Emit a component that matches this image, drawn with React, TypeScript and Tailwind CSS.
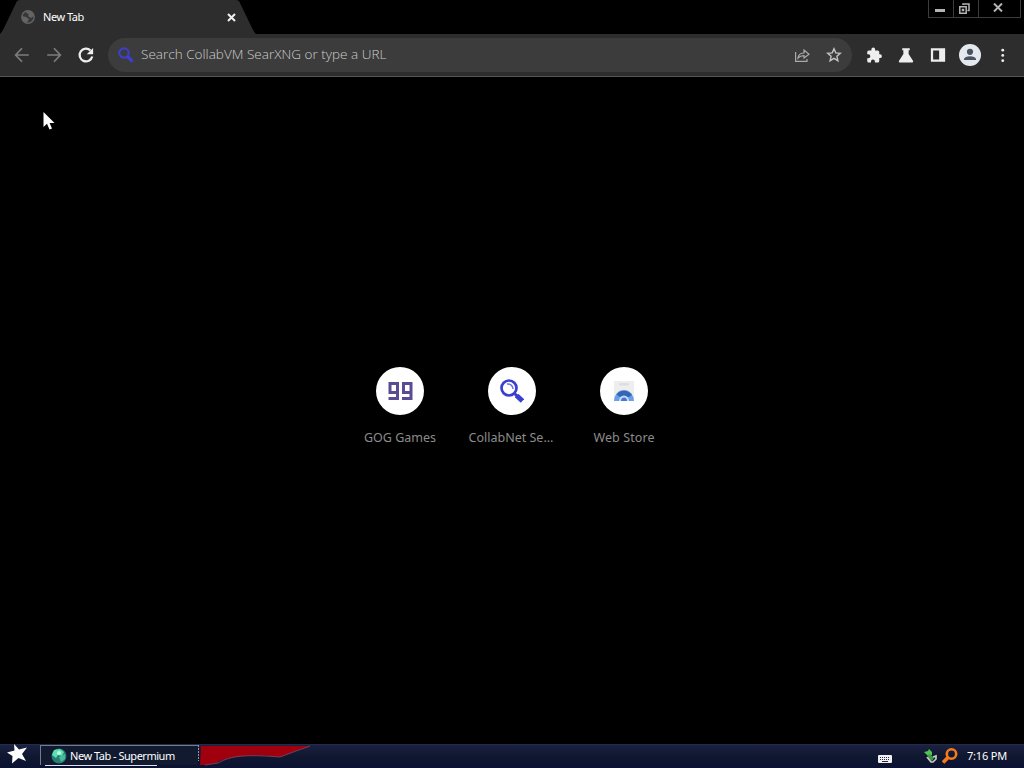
import type { ReactNode } from "react";

const TabStrip = () => {
  return (
    <div className="flex h-[34px] shrink-0 items-start justify-between bg-black">
      <div className="relative flex h-[34px] w-[256px] items-center">
        <svg className="absolute inset-0" width="256" height="34" viewBox="0 0 256 34">
          <path d="M0 34C2 32 3 30 4 28L16 3Q17 0 20 0H236Q239 0 240 3L252 28Q254 32 256 34Z" fill="#2d2d2d" />
        </svg>
        <svg className="relative ml-[21px]" width="14" height="14" viewBox="0 0 14 14">
          <circle cx="7" cy="7" r="6.2" fill="#383838" stroke="#646464" strokeWidth="1.4" />
          <path d="M1 6l4 1 3 2-1 2-2 2-3-2zM6 1l5 1 2 4-3 2-3-2 1-2-3-1z" fill="#646464" />
        </svg>
        <span className="relative ml-2 w-[180px] text-[11px] leading-[14px] tracking-[-0.45px] text-white">New Tab</span>
        <svg className="relative ml-[4px]" width="9" height="9" viewBox="0 0 9 9">
          <path d="M1 1l7 7M8 1L1 8" stroke="#f0f0f0" strokeWidth="2" />
        </svg>
      </div>
      <div className="mr-[3px] flex h-[18px] w-[93px] border-x border-b border-[#3c3c3c]">
        <div className="flex w-[25px] border-r border-[#3c3c3c]">
          <div className="mt-[9px] ml-[6px] h-[3px] w-[10px] bg-[#b4b4b4]" />
        </div>
        <div className="flex w-[25px] border-r border-[#3c3c3c]">
          <svg className="mt-[3px] ml-[5px]" width="11" height="11" viewBox="0 0 11 11" fill="none" stroke="#b4b4b4" strokeWidth="1.5">
            <path d="M4 2V1H10V7.5H8.5M.8 3.8H7.2V10.2H.8ZM3.5 6.5h1v1h-1z" />
          </svg>
        </div>
        <svg className="mt-[3px] ml-[14px]" width="10" height="9" viewBox="0 0 10 9">
          <path d="M1 .5l8 8M9 .5l-8 8" stroke="#b4b4b4" strokeWidth="2" />
        </svg>
      </div>
    </div>
  );
};

const Glyph = ({ children }: { children: ReactNode }) => (
  <svg width="18" height="18" viewBox="0 0 24 24" fill="#eeeeee" className="shrink-0">
    {children}
  </svg>
);

const Toolbar = () => {
  return (
    <div className="flex h-[43px] shrink-0 items-center border-b border-[#565656] bg-[#2d2d2d]">
      <div className="ml-[13px] flex w-[95px] gap-[14px]">
        <Glyph>
          <path d="M21 12H4M12 3L3.5 12L12 21" fill="none" stroke="#7c7c7c" strokeWidth="2.3" />
        </Glyph>
        <Glyph>
          <path d="M3 12H20M12 3L20.500 12L12 21" fill="none" stroke="#7c7c7c" strokeWidth="2.3" />
        </Glyph>
        <Glyph>
          <path d="M18 6a8.5 8.5 0 1 0 2.3 8" fill="none" stroke="#eeeeee" strokeWidth="3" />
          <path d="M21.500 2.500V11H13z" />
        </Glyph>
      </div>
      <div className="flex h-[34px] w-[744px] items-center rounded-full bg-[#3c3c3c]">
        <svg className="ml-[10px]" width="16" height="16" viewBox="0 0 16 16" fill="none" stroke="#3e3ed0">
          <circle cx="6" cy="6" r="4.7" strokeWidth="2.1" />
          <path d="M9.5 9.5L14.6 14.6" strokeWidth="3.2" />
        </svg>
        <span className="mt-[-2px] ml-[7px] w-[645px] font-['Open_Sans','Noto_Sans',sans-serif] text-[13.5px] leading-[18px] font-light tracking-[0.02px] text-[#cccccc]">
          Search CollabVM SearXNG or type a URL
        </span>
        <svg className="ml-2" width="16" height="16" viewBox="0 0 16 16" fill="none" stroke="#aaaaaa" strokeWidth="1.2">
          <path d="M1.6 5V14.4H13V12M4 11C4.5 7.5 6.5 6 10 6V3L15 7.2L10 11V8.6C7 8.6 5.5 9.2 4 11Z" />
        </svg>
        <svg className="ml-4" width="16" height="16" viewBox="0 0 16 16" fill="none" stroke="#c4c4c4" strokeWidth="1.4">
          <path d="M8 1.8l1.8 4.1 4.5.4-3.4 3 1 4.4L8 11.4l-3.9 2.3 1-4.4-3.4-3 4.5-.4z" />
        </svg>
      </div>
      <div className="ml-[13px] flex items-center gap-[14px]">
        <Glyph>
          <path d="M20 11H19V8a2 2 0 0 0-2-2h-3.500V4.500a2.500 2.500 0 0 0-5 0V6H5a2 2 0 0 0-2 2v3h1.500a2.600 2.600 0 0 1 0 5.200H3V20a2 2 0 0 0 2 2h3v-1.500a2.600 2.600 0 0 1 5.200 0V22H17a2 2 0 0 0 2-2v-4h1a2.500 2.500 0 0 0 0-5z" />
        </Glyph>
        <Glyph>
          <path d="M7 3h10v2.500h-1.500V10.500L21.500 20q.5 2-1.500 2H4q-2 0-1.500-2L8.500 10.500V5.500H7z" />
        </Glyph>
        <Glyph>
          <path d="M2.500 3h19v18h-19zM5.500 6v12h8V6z" fillRule="evenodd" />
        </Glyph>
        <svg className="-mx-[2px]" width="22" height="22" viewBox="0 0 22 22">
          <circle cx="11" cy="11" r="11" fill="#e4e8ef" />
          <circle cx="11" cy="7.800" r="3.100" fill="#4b5260" />
          <path d="M5 16V14.800Q6 12.200 11 12.200T17 14.800V16Z" fill="#4b5260" />
        </svg>
        <Glyph>
          <circle cx="13" cy="5.500" r="1.900" />
          <circle cx="13" cy="12.500" r="1.900" />
          <circle cx="13" cy="19.500" r="1.900" />
        </Glyph>
      </div>
    </div>
  );
};

const Shortcut = ({ label, labelClass, children }: { label: string; labelClass: string; children: ReactNode }) => {
  return (
    <div className="flex w-28 flex-col items-center">
      <div className="flex h-12 w-12 items-center justify-center rounded-full bg-white">{children}</div>
      <span
        className={`mt-[14px] whitespace-nowrap font-['Noto_Sans',sans-serif] text-[12.5px] leading-[18px] text-[#8c8c8c] ${labelClass}`}
      >
        {label}
      </span>
    </div>
  );
};

const NewTabPage = () => {
  return (
    <main className="relative flex grow justify-center bg-black pt-[290px]">
      <svg className="absolute top-[35px] left-[43px]" width="12" height="19" viewBox="0 0 12 19">
        <path d="M.5 0V15L4 11.700L6.500 17.500L9 16.500L6.600 11H11.500Z" fill="#ffffff" />
      </svg>
      <Shortcut label="GOG Games" labelClass="">
        <svg width="25" height="18" viewBox="0 0 25 18" fill="none" stroke="#5b4b94" strokeWidth="3">
          <path d="M8 10.500H2V1.500H9.500V16.500H.5M21.500 10.500H15.500V1.500H23V16.500H14" />
        </svg>
      </Shortcut>
      <Shortcut label="CollabNet Se..." labelClass="-ml-[2px]">
        <svg width="24" height="24" viewBox="0 0 24 24" fill="none" stroke="#3a3fd0">
          <circle cx="9" cy="9" r="7.500" strokeWidth="2.700" />
          <path d="M7 5A5 5 0 0 1 13 10" strokeWidth="1.500" stroke="#7075df" />
          <path d="M14.500 14.500L17 17" strokeWidth="3" />
          <path d="M16.500 16.500L22.500 22" strokeWidth="5" />
        </svg>
      </Shortcut>
      <Shortcut label="Web Store" labelClass="tracking-[0.1px]">
        <svg width="20" height="20" viewBox="0 0 20 20">
          <path d="M0 0H20V20H0Z" fill="#eeeeef" />
          <rect x="5" y="2" width="10" height="2.500" rx="1.200" fill="#dededf" />
          <path d="M0 20A10 11 0 0 1 20 20Z" fill="#6a9ee8" />
          <path d="M2.500 13.500A10 11 0 0 1 18 14L15 16H6Z" fill="#3565b5" />
          <path d="M5 20A5 5.500 0 0 1 15 20Z" fill="#c5dafa" />
          <path d="M7 20A3 3.500 0 0 1 13 20Z" fill="#4178cd" />
        </svg>
      </Shortcut>
    </main>
  );
};

const Taskbar = () => {
  return (
    <footer className="flex h-6 shrink-0 border-t border-[#25294a] bg-linear-to-b from-[#1b2142] via-[#10172f] to-[#0b1233] text-[11px] leading-[14px] text-white">
      <svg className="mt-[-1px] ml-[7px]" width="21" height="20" viewBox="0 0 21 20">
        <path d="M7 0L12 5.500L20 3.500L15 10L19 17L11.500 14L5 19.500L5.500 12L0 8.500L7.500 6.500Z" fill="#ffffff" />
      </svg>
      <div className="relative ml-3 flex h-[20px] w-[158px] items-center border-t border-l border-[#737b91] bg-[#111a2e]">
        <svg className="ml-[10px]" width="16" height="16" viewBox="0 0 16 16">
          <circle cx="8" cy="8" r="7.500" fill="#267e75" />
          <path d="M3 2L9 1L13 4L11 8L7 7L5 10L1 7Z" fill="#5ce0b4" />
          <path d="M8 9L14 6L14 11L10 14Z" fill="#49b99c" />
          <circle cx="8" cy="5" r="2" fill="#bff7df" />
        </svg>
        <span className="ml-[3px] whitespace-nowrap tracking-[-0.48px]">New Tab - Supermium</span>
        <div className="absolute bottom-[-1px] left-1 h-px w-[112px] bg-[#dde1ea]" />
      </div>
      <svg width="120" height="22" viewBox="0 0 120 22">
        <path d="M3 1H112L98 6L82 12Q62 9 40 12T20 18L7 20H2Z" fill="#a0000e" />
        <path d="M7 20L20 18Q30 12 44 11T82 12L98 6L112 1" fill="none" stroke="#704059" />
        <path d="M.5 0V16" stroke="#9196a4" strokeDasharray="2 1" />
      </svg>
      <div className="flex grow items-start justify-end">
        <svg className="mt-[10px] mr-[32px]" width="14" height="8" viewBox="0 0 14 8">
          <rect width="14" height="8" rx="1" fill="#f0f0f0" />
          <path d="M2 2.500H12M2 4.500H12" stroke="#252b42" strokeDasharray="1 1" />
          <path d="M4 6.500H10" stroke="#252b42" />
        </svg>
        <svg className="mt-[4px] mr-[4px]" width="14" height="15" viewBox="0 0 14 15">
          <path d="M0 3L4 2L5 0L8 3L8 6L4 7Z" fill="#50c451" />
          <path d="M4 6L6 5L10 9L8 12L4 10Z" fill="#459648" />
          <path d="M3 8L7 13L9 13L12 10V7L9 8" fill="none" stroke="#c3cdc3" strokeWidth="1.700" />
        </svg>
        <svg className="mt-[3px] mr-[9px]" width="16" height="16" viewBox="0 0 16 16" fill="none" stroke="#f47a1c">
          <circle cx="9.500" cy="6" r="4.700" strokeWidth="2.600" />
          <path d="M6 9.500L1 14.500" strokeWidth="3.700" />
        </svg>
        <span className="mt-1 w-[57px] whitespace-nowrap tracking-[-0.2px]">7:16 PM</span>
      </div>
    </footer>
  );
};

export default function App() {
  return (
    <div className="flex h-[768px] w-[1024px] flex-col overflow-hidden bg-black font-['Noto_Sans','Open_Sans',sans-serif]">
      <TabStrip />
      <Toolbar />
      <NewTabPage />
      <Taskbar />
    </div>
  );
}
